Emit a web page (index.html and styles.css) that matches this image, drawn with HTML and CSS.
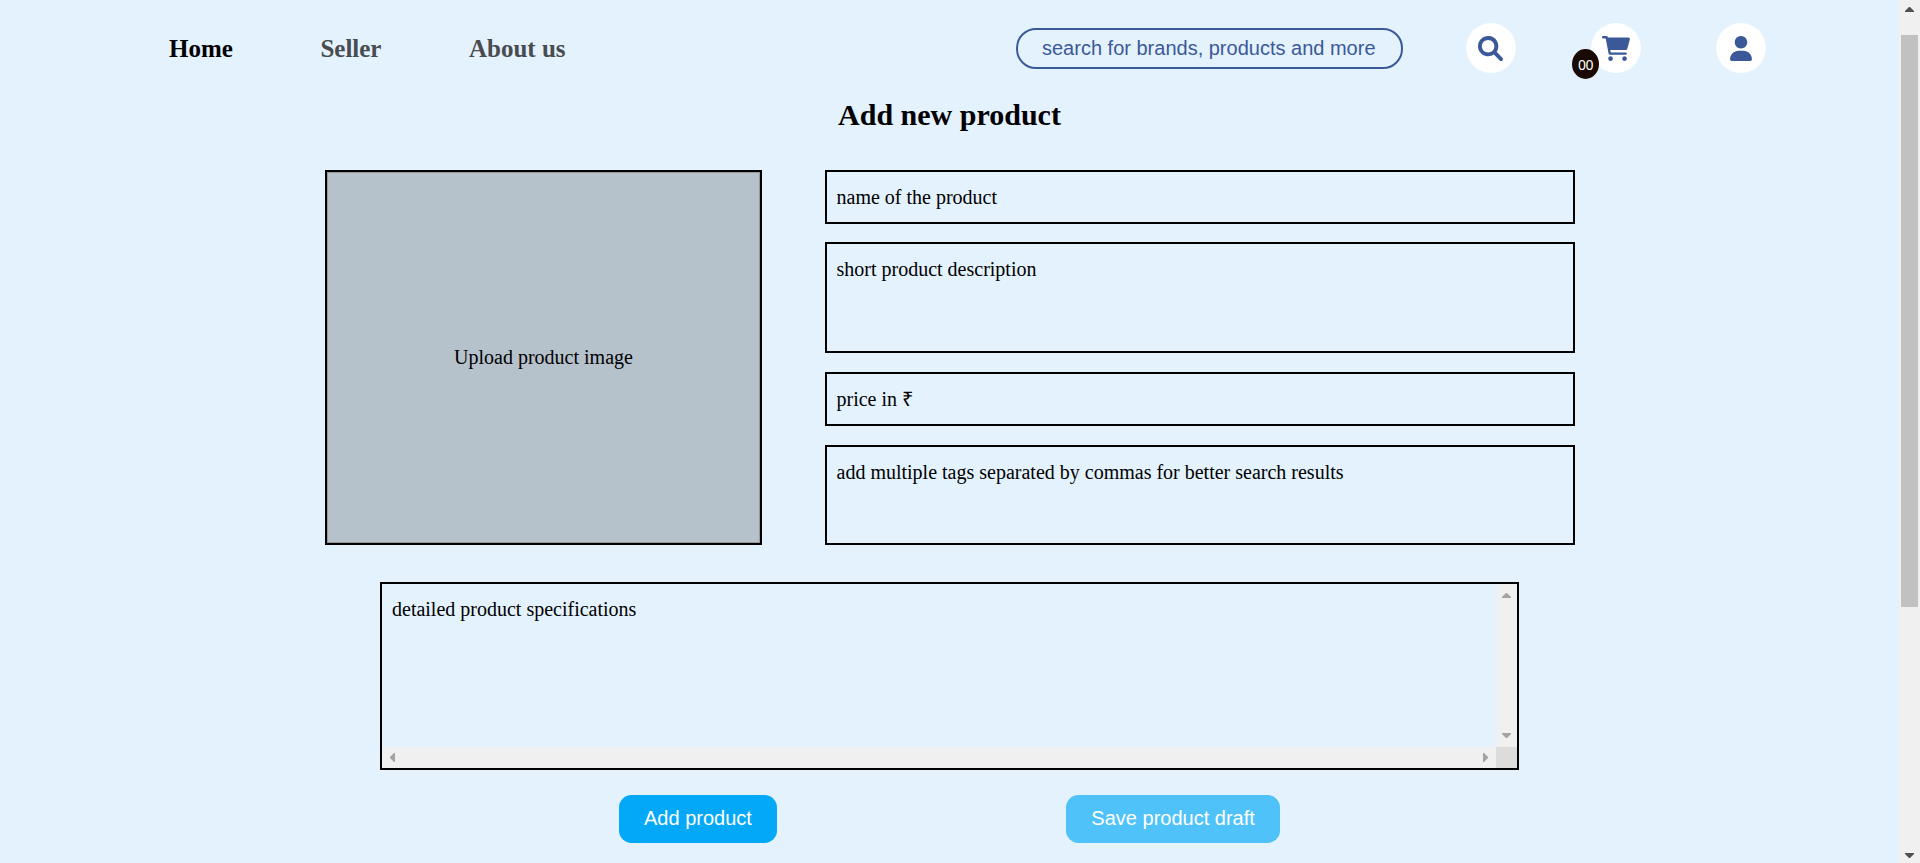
FILE: index.html
```html
<!DOCTYPE html>
<html lang="en">
<head>
<meta charset="utf-8">
<title>Add new product</title>
<link rel="stylesheet" href="styles.css">
</head>
<body>
<div class="page">
  <header class="navbar">
    <nav class="nav-links">
      <a class="nav-link active">Home</a>
      <a class="nav-link">Seller</a>
      <a class="nav-link">About us</a>
    </nav>
    <div class="search-box">search for brands, products and more</div>
    <div class="nav-icons">
      <a class="icon-button">
        <svg width="25" height="25" viewBox="0 0 512 512"><path d="M500.3 443.7l-119.7-119.7c27.22-40.41 40.65-90.9 33.46-144.7C401.8 87.79 326.8 13.32 235.2 1.723C99.01-15.51-15.51 99.01 1.724 235.2c11.6 91.64 86.08 166.7 177.6 178.9c53.8 7.189 104.3-6.236 144.7-33.46l119.7 119.7c15.62 15.62 40.95 15.62 56.57 0C515.9 484.7 515.9 459.3 500.3 443.7zM79.1 208c0-70.58 57.42-128 128-128s128 57.42 128 128c0 70.58-57.42 128-128 128S79.1 278.6 79.1 208z"/></svg>
      </a>
      <a class="icon-button">
        <svg width="28" height="25" viewBox="0 0 576 512"><path d="M96 0C107.5 0 117.4 8.19 119.6 19.51L121.1 32H541.8C562.1 32 578.3 52.25 572.6 72.66L518.6 264.7C514.7 278.5 502.1 288 488.3 288H170.7L179.9 336H488C501.3 336 512 346.7 512 360C512 373.3 501.3 384 488 384H159.1C148.5 384 138.6 375.8 136.4 364.5L76.14 48H24C10.75 48 0 37.25 0 24C0 10.75 10.75 0 24 0H96zM128 464C128 437.5 149.5 416 176 416C202.5 416 224 437.5 224 464C224 490.5 202.5 512 176 512C149.5 512 128 490.5 128 464zM512 464C512 490.5 490.5 512 464 512C437.5 512 416 490.5 416 464C416 437.5 437.5 416 464 416C490.5 416 512 437.5 512 464z"/></svg>
        <span class="cart-count">00</span>
      </a>
      <a class="icon-button">
        <svg width="22" height="25" viewBox="0 0 448 512"><path d="M224 256c70.7 0 128-57.31 128-128s-57.3-128-128-128C153.3 0 96 57.31 96 128S153.3 256 224 256zM274.7 304H173.3C77.61 304 0 381.6 0 477.3c0 19.14 15.52 34.67 34.66 34.67h378.7C432.5 512 448 496.5 448 477.3C448 381.6 370.4 304 274.7 304z"/></svg>
      </a>
    </div>
  </header>
  <main class="content">
    <h1 class="title">Add new product</h1>
    <div class="product-form">
      <div class="upload">Upload product image</div>
      <div class="fields">
        <div class="field">name of the product</div>
        <div class="field field-description">short product description</div>
        <div class="field field-price">price in ₹</div>
        <div class="field">add multiple tags separated by commas for better search results</div>
      </div>
    </div>
    <div class="details">
      <div class="details-text">detailed product specifications</div>
      <div class="bar bar-vertical">
        <svg class="arrow" width="9" height="5" viewBox="0 0 9 5"><path d="M0 5V4L4 0H5L9 4V5z"/></svg>
        <svg class="arrow" width="9" height="5" viewBox="0 0 9 5"><path d="M0 0V1L4 5H5L9 1V0z"/></svg>
      </div>
      <div class="bar bar-horizontal">
        <svg class="arrow" width="5" height="9" viewBox="0 0 5 9"><path d="M5 0H4L0 4V5L4 9H5z"/></svg>
        <svg class="arrow" width="5" height="9" viewBox="0 0 5 9"><path d="M0 0H1L5 4V5L1 9H0z"/></svg>
      </div>
      <div class="bar-corner"></div>
    </div>
    <div class="actions">
      <button class="button">Add product</button>
      <button class="button button-draft">Save product draft</button>
    </div>
  </main>
</div>
<div class="page-bar">
  <svg class="arrow-dark" width="9" height="5" viewBox="0 0 9 5"><path d="M0 5V4L4 0H5L9 4V5z"/></svg>
  <div class="track"><div class="thumb"></div></div>
  <svg class="arrow-dark" width="9" height="5" viewBox="0 0 9 5"><path d="M0 0V1L4 5H5L9 1V0z"/></svg>
</div>
</body>
</html>
```
FILE: styles.css
```css
* { box-sizing: border-box; }

body {
  margin: 0;
  height: 863px;
  display: flex;
  overflow: hidden;
  background: #e3f2fd;
  color: #000;
  font: 20px/23px "Liberation Serif", serif;
}

svg { display: block; }

.page { width: 1899px; }

.navbar {
  display: flex;
  align-items: center;
  height: 96px;
  padding: 0 133px 0 169px;
}

.nav-links {
  display: flex;
  gap: 87.5px;
  font-size: 25px;
  line-height: 29px;
  font-weight: bold;
}

.nav-link { color: #484c50; white-space: nowrap; }
.nav-link.active { color: #000; }

.search-box {
  width: 387px;
  height: 41px;
  margin-left: auto;
  padding-left: 24px;
  border: 2px solid #3b5998;
  border-radius: 20px;
  color: #3b5998;
  font-family: "Liberation Sans", sans-serif;
  line-height: 37px;
  white-space: nowrap;
}

.nav-icons {
  display: flex;
  gap: 75px;
  margin-left: 63px;
}

.icon-button {
  position: relative;
  display: flex;
  align-items: center;
  justify-content: center;
  width: 50px;
  height: 50px;
  padding: 1px 1px 0 0;
  border-radius: 50%;
  background: #fff;
  fill: #3b5998;
}

.cart-count {
  position: absolute;
  left: -19px;
  top: 26px;
  width: 27px;
  height: 30px;
  border-radius: 50%;
  background: #190b04;
  color: #fff;
  font: 14px/31px "Noto Sans", sans-serif;
  letter-spacing: -0.5px;
  text-align: center;
}

.title {
  margin: 0;
  padding-top: 2px;
  height: 74px;
  font-size: 30px;
  line-height: 34px;
  text-align: center;
}

.product-form {
  display: grid;
  grid-template-columns: 437px 750px;
  gap: 63px;
  height: 375px;
  margin-left: 325px;
}

.upload {
  display: flex;
  align-items: center;
  justify-content: center;
  border: 2px solid #000;
  background: #b5c1cb;
  box-shadow: inset 0 0 0 1px #99999a;
}

.fields {
  display: grid;
  grid-template-rows: 54px 112px 55px 100px;
  row-gap: 18px;
}

.field { padding: 14px 9.5px; border: 2px solid #000; }
.field-description { height: 111px; }
.field-price { height: 54px; }

.details {
  display: grid;
  grid-template-columns: 1fr 21px;
  grid-template-rows: 1fr 21px;
  width: 1139px;
  height: 188px;
  margin: 37px 0 0 380px;
  border: 2px solid #000;
}

.details-text { padding: 14px 10px; }

.bar {
  display: flex;
  align-items: center;
  justify-content: space-between;
  background: #f0f0f0;
}

.bar-vertical { flex-direction: column; padding: 9px 0; }
.bar-horizontal { padding: 0 8px; }
.bar-corner { background: #dcdcdc; }
.arrow { fill: #a3a3a3; }

.actions {
  display: flex;
  gap: 289px;
  margin: 25px 0 0 619px;
}

.button {
  height: 48px;
  padding: 0 25px 1px;
  border: 0;
  border-radius: 12.5px;
  background: #03a9f7;
  color: #fff;
  font: 20px/23px "Liberation Sans", sans-serif;
}

.button-draft { padding: 0 25.5px 1px; background: #4fc3f9; }

.page-bar {
  display: flex;
  flex-direction: column;
  align-items: center;
  width: 21px;
  padding: 7px 0 5px;
  background: #f0f0f0;
}

.arrow-dark { fill: #505050; }
.track { flex: 1; padding-top: 23px; }
.thumb { width: 17px; height: 572px; background: #c1c1c1; }
```
